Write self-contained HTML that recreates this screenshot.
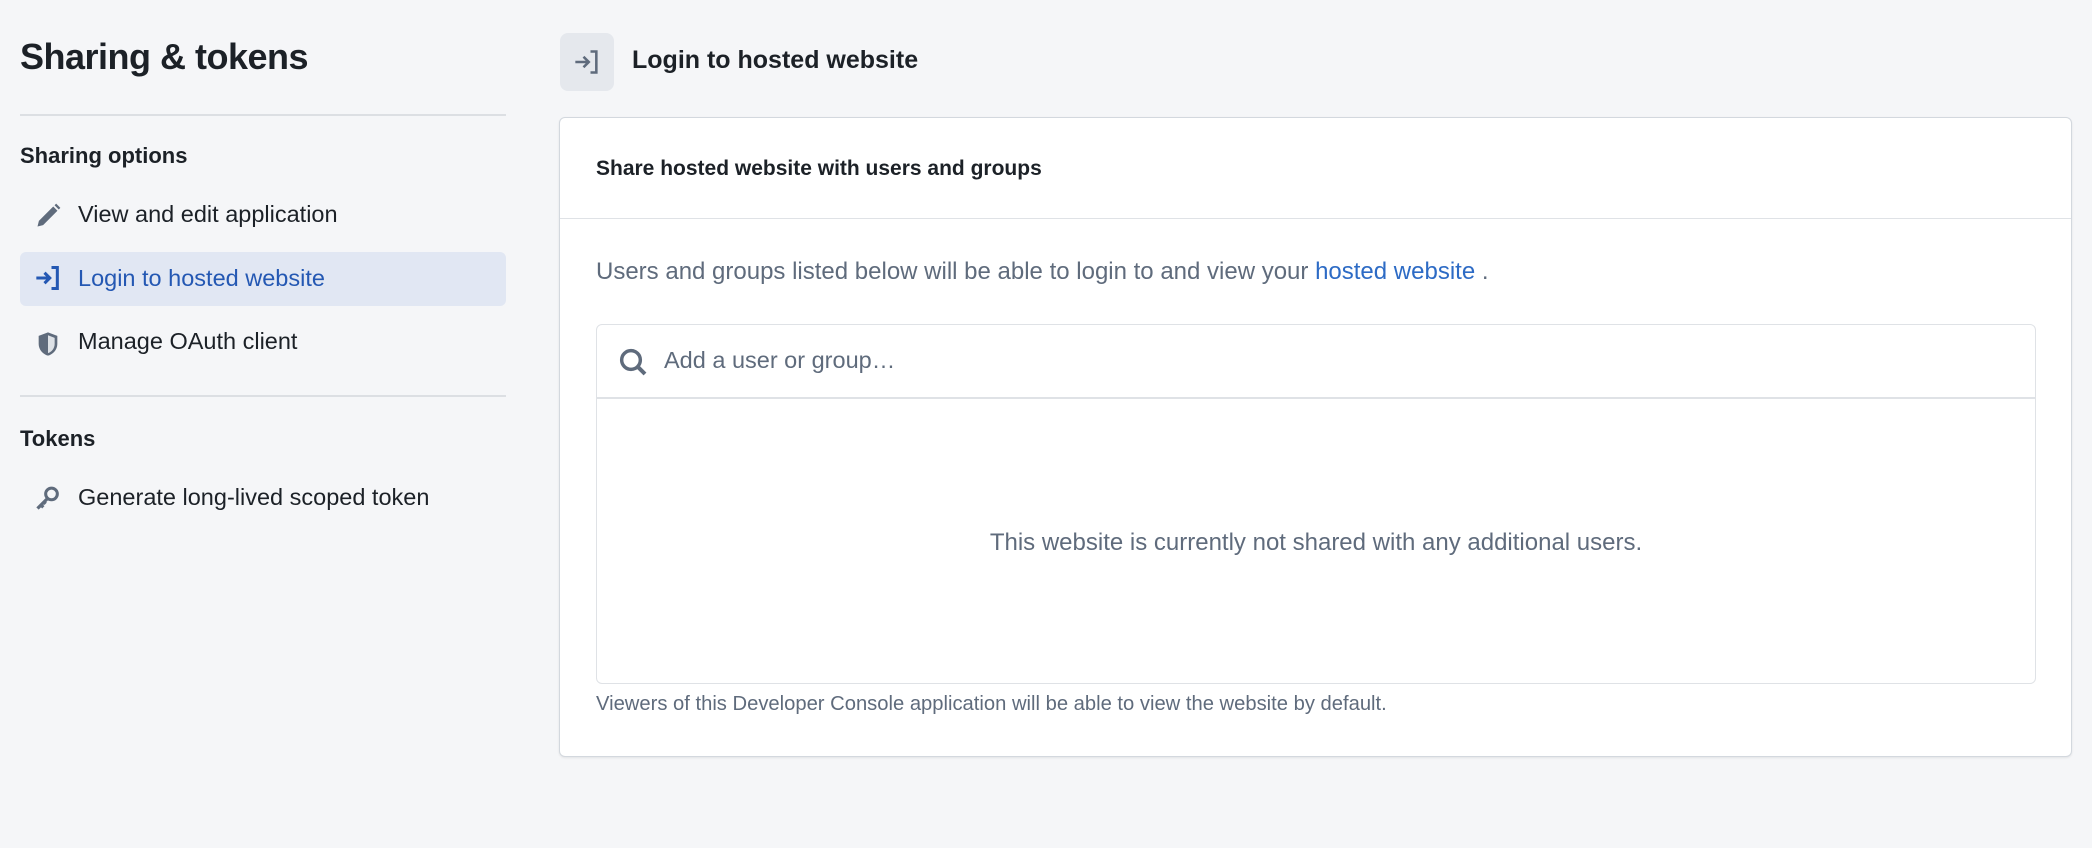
<!DOCTYPE html>
<html><head><meta charset="utf-8"><style>
*{box-sizing:border-box;margin:0;padding:0}
body{width:2092px;height:848px;background:#f5f6f8;font-family:"Liberation Sans",sans-serif;color:#1c2127;position:relative;overflow:hidden}
.a{position:absolute;white-space:nowrap}
.title{left:20px;top:36px;font-size:36px;font-weight:bold;letter-spacing:-0.5px}
.hr{position:absolute;left:20px;width:486px;height:2px;background:#dcdfe3}
.sec{left:20px;font-size:22px;font-weight:bold}
.item{left:78px;font-size:23.5px}
.ic{position:absolute;left:34px;width:28px;height:28px}
.active{position:absolute;left:20px;top:252px;width:486px;height:54px;background:#e1e7f3;border-radius:6px}
.card{position:absolute;left:559px;top:117px;width:1513px;height:640px;background:#fff;border:1px solid #d3d8de;border-radius:6px;box-shadow:0 1px 2px rgba(0,0,0,.08)}
.box{position:absolute;left:596px;top:324px;width:1440px;height:360px;border:1px solid #dfe2e6;border-radius:6px;background:#fff}
</style></head><body>
<div class="a title">Sharing &amp; tokens</div>
<div class="hr" style="top:114px"></div>
<div class="a sec" style="top:143px">Sharing options</div>
<svg class="ic" style="top:202px" viewBox="0 0 24 24"><path d="M3 21l1.2-4.8L16.5 3.9l3.6 3.6L7.8 19.8z M17.6 2.8l1.4-1.4 3.6 3.6-1.4 1.4z" fill="#5f6b7c"/></svg>
<div class="a item" style="top:201px">View and edit application</div>
<div class="active"></div>
<svg class="ic" style="top:264px" viewBox="0 0 24 24"><path d="M2 12h11M9 7.5l4.5 4.5L9 16.5M15 3h5v18h-5" fill="none" stroke="#2458b3" stroke-width="2.6" stroke-linejoin="miter"/></svg>
<div class="a item" style="top:265px;color:#2458b3">Login to hosted website</div>
<svg class="ic" style="top:330px" viewBox="0 0 24 24"><path d="M12 2L4 5v7c0 5 4 9 8 10 4-1 8-5 8-10V5z" fill="#5f6b7c"/><path d="M12 4.5l5.7 2.2V12c0 3.8-2.8 7-5.7 7.8z" fill="#dde1e6"/></svg>
<div class="a item" style="top:328px">Manage OAuth client</div>
<div class="hr" style="top:395px"></div>
<div class="a sec" style="top:426px">Tokens</div>
<svg class="ic" style="top:484px" viewBox="0 0 24 24"><circle cx="15" cy="8.5" r="5" fill="none" stroke="#5f6b7c" stroke-width="2.6"/><path d="M12 12L3 21M6 18l2 2M8.5 15.5l1.5 1.5" stroke="#5f6b7c" stroke-width="2.8" fill="none"/></svg>
<div class="a item" style="top:484px">Generate long-lived scoped token</div>

<div style="position:absolute;left:560px;top:33px;width:54px;height:58px;background:#e5e8ed;border-radius:8px"></div>
<svg style="position:absolute;left:573px;top:48px;width:28px;height:28px" viewBox="0 0 24 24"><path d="M2 12h11M9 7.5l4.5 4.5L9 16.5M15 3h5v18h-5" fill="none" stroke="#5f6b7c" stroke-width="2.2"/></svg>
<div class="a" style="left:632px;top:46px;font-size:25px;font-weight:bold">Login to hosted website</div>

<div class="card"></div>
<div class="a" style="left:596px;top:157px;font-size:21px;font-weight:bold">Share hosted website with users and groups</div>
<div style="position:absolute;left:560px;top:218px;width:1511px;height:1px;background:#dfe2e6"></div>
<div class="a" style="left:596px;top:258px;font-size:24px;color:#5f6b7c">Users and groups listed below will be able to login to and view your <span style="color:#2d6bc5">hosted website</span> .</div>
<div class="box"></div>
<svg style="position:absolute;left:617px;top:346px;width:32px;height:32px" viewBox="0 0 24 24"><circle cx="10.5" cy="10.5" r="7" fill="none" stroke="#5f6b7c" stroke-width="2.6"/><path d="M15.5 15.5L21 21" stroke="#5f6b7c" stroke-width="3"/></svg>
<div class="a" style="left:664px;top:347px;font-size:23.5px;color:#5f6b7c">Add a user or group…</div>
<div style="position:absolute;left:597px;top:397px;width:1438px;height:2px;background:#dfe2e6"></div>
<div class="a" style="left:596px;width:1440px;text-align:center;top:529px;font-size:24px;color:#5f6b7c">This website is currently not shared with any additional users.</div>
<div class="a" style="left:596px;top:693px;font-size:20.2px;color:#5f6b7c">Viewers of this Developer Console application will be able to view the website by default.</div>
</body></html>
